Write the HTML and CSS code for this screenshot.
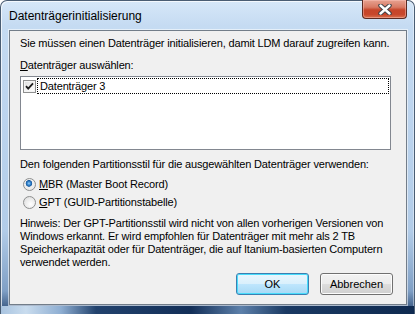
FILE: index.html
```html
<html lang="de">
  <head>
    <meta charset="utf-8" />
    <title>Datenträgerinitialisierung</title>
    <link rel="stylesheet" href="styles.css">
  </head>
  <body>
    <div class="window">
      <div class="titlebar">
        <span class="title">Datenträgerinitialisierung</span>
        <div class="close-btn">
          <svg width="14" height="11" viewBox="0 0 14 11">
            <path d="M2.5 1.5 L11.5 9.5 M11.5 1.5 L2.5 9.5" stroke="#3b3f45" stroke-width="4.4" stroke-linecap="round" fill="none" />
            <path d="M2.5 1.5 L11.5 9.5 M11.5 1.5 L2.5 9.5" stroke="#fff" stroke-width="2.4" stroke-linecap="round" fill="none" />
          </svg>
        </div>
      </div>
      <div class="client">
        <p class="intro">Sie müssen einen Datenträger initialisieren, damit LDM darauf zugreifen kann.</p>
        <p class="list-label"><u>D</u>atenträger auswählen:</p>
        <div class="listbox">
          <div class="item">
            <span class="checkbox">
              <svg width="13" height="13" viewBox="0 0 13 13">
                <path d="M3 6.2 L5.2 8.6 L10 3.4" stroke="#1c1c1c" stroke-width="1.8" fill="none" />
              </svg>
            </span>
            <span class="item-text">Datenträger 3</span>
          </div>
        </div>
        <p class="style-label">Den folgenden Partitionsstil für die ausgewählten Datenträger verwenden:</p>
        <div class="radio-row mbr">
          <span class="radio selected"></span>
          <span><u>M</u>BR (Master Boot Record)</span>
        </div>
        <div class="radio-row gpt">
          <span class="radio"></span>
          <span><u>G</u>PT (GUID-Partitionstabelle)</span>
        </div>
        <p class="hint">Hinweis: Der GPT-Partitionsstil wird nicht von allen vorherigen Versionen von<br />
          Windows erkannt. Er wird empfohlen für Datenträger mit mehr als 2 TB<br />
          Speicherkapazität oder für Datenträger, die auf Itanium-basierten Computern<br />
          verwendet werden.</p>
        <div class="buttons">
          <button class="btn default">OK</button>
          <button class="btn">Abbrechen</button>
        </div>
      </div>
    </div>
  </body>
</html>
```

FILE: styles.css
```css
body {
  margin: 0;
  padding: 0;
  width: 415px;
  height: 314px;
  overflow: hidden;
  background: #fff;
  font-family: "Liberation Sans", Arial, sans-serif;
  font-size: 11px;
  letter-spacing: -0.15px;
  color: #000;
}

.window {
  box-sizing: border-box;
  position: relative;
  width: 415px;
  height: 314px;
  display: flex;
  flex-direction: column;
  padding: 0 7px 9px 8px;
  border: 1px solid #4a5d73;
  border-bottom: none;
  border-radius: 7px 7px 0 0;
  background: linear-gradient(to bottom, #d6e7f8 0, #c5dbf2 25px, #bcd4ee 120px, #b2cce8 230px, #7f9fc5 290px, #2b4a74 312px);
  box-shadow: inset 1px 1px 0 rgba(255, 255, 255, 0.7), inset -1px 0 0 rgba(255, 255, 255, 0.4);
}

.window:after {
  content: " ";
  position: absolute;
  left: 0;
  right: 0;
  bottom: 0;
  height: 8px;
  background: linear-gradient(to right, #a9c4e0 0, #c9dcee 25px, #8eaed2 60px, #22426d 95px, #132f58 190px, #5d80aa 240px, #1a3962 285px, #0f2a50 100%);
}

.titlebar {
  height: 29px;
  flex-shrink: 0;
  display: flex;
  align-items: flex-start;
  justify-content: space-between;
}

.title {
  margin-top: 8px;
  font-size: 12px;
  line-height: 15px;
  letter-spacing: 0;
  color: #000;
}

.close-btn {
  box-sizing: border-box;
  width: 45px;
  height: 19px;
  margin-top: -1px;
  display: flex;
  align-items: center;
  justify-content: center;
  border: 1px solid #5b2a22;
  border-top: none;
  border-radius: 0 0 4px 4px;
  background: linear-gradient(to bottom, #e7a291 0, #d87a64 40%, #c6452a 55%, #c8462b 80%, #d9714e 100%);
  box-shadow: inset 0 0 0 1px rgba(255, 200, 190, 0.45);
}

.close-btn svg {
  display: block;
}

.client {
  flex: 1;
  min-height: 0;
  display: flex;
  flex-direction: column;
  padding: 6px 13px 9px 10px;
  background-color: #f0f0f0;
  border: 1px solid #727d89;
  box-shadow: 0 0 0 1px rgba(255, 255, 255, 0.55);
  white-space: nowrap;
}

.client p {
  margin: 0;
  line-height: 13px;
}

.intro {
  margin-top: 1px;
}

.client .list-label {
  margin-top: 9px;
}

.listbox {
  box-sizing: border-box;
  height: 74px;
  flex-shrink: 0;
  margin-top: 4px;
  margin-right: 2px;
  padding: 1px;
  background: #fff;
  border: 1px solid #828790;
}

.item {
  display: flex;
  align-items: center;
  height: 16px;
}

.checkbox {
  box-sizing: border-box;
  width: 13px;
  height: 13px;
  margin-left: 1px;
  border: 1px solid #8e8f8f;
  background: linear-gradient(135deg, #dcdcdc 0, #f6f6f6 60%, #ffffff 100%);
  box-shadow: inset 0 0 0 1px #f4f4f4;
  display: flex;
}

.checkbox svg {
  margin: -1px;
}

.item-text {
  flex: 1;
  box-sizing: border-box;
  height: 16px;
  margin-left: 1px;
  padding: 1px 0 0 2px;
  line-height: 13px;
  border: 1px dotted #000;
}

.client .style-label {
  margin-top: 8px;
}

.radio-row {
  display: flex;
  align-items: center;
  height: 17px;
  line-height: 13px;
}

.radio-row.mbr {
  margin-top: 5px;
}

.radio-row.gpt {
  margin-top: 1px;
}

.radio {
  box-sizing: border-box;
  width: 13px;
  height: 13px;
  margin: 0 3px 0 3px;
  border: 1px solid #8e8f8f;
  border-radius: 50%;
  background: radial-gradient(circle at 60% 65%, #ffffff 0, #ececec 50%, #d6d6d6 100%);
}

.radio.selected {
  background: radial-gradient(circle at 45% 40%, #9fd0f5 0, #3c8ed6 1.5px, #1a5a9e 3px, #f0f0f0 3.6px, #e4e4e4 100%);
}

.client .hint {
  margin-top: 6px;
}

.buttons {
  margin-top: auto;
  display: flex;
  justify-content: flex-end;
  gap: 11px;
}

.btn {
  box-sizing: border-box;
  width: 73px;
  height: 22px;
  padding: 0;
  font-family: "Liberation Sans", Arial, sans-serif;
  font-size: 11px;
  color: #000;
  border: 1px solid #707070;
  border-radius: 3px;
  background: linear-gradient(to bottom, #f2f2f2 0, #ebebeb 50%, #dddddd 51%, #cfcfcf 100%);
  box-shadow: inset 0 0 0 1px #fcfcfc;
}

.btn.default {
  border-color: #3c7fb1;
  background: linear-gradient(to bottom, #eaf6fd 0, #d9f0fc 50%, #bee6fd 51%, #a7d9f5 100%);
  box-shadow: inset 0 0 0 1px #48dcfb;
}
```
